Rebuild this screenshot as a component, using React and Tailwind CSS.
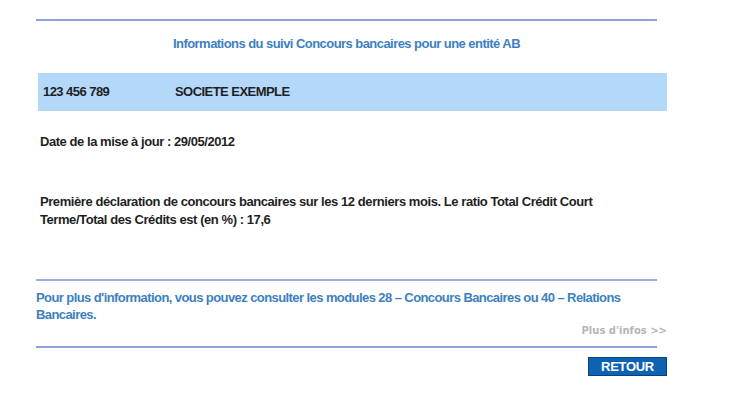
import React from 'react';

const font = { fontFamily: '"Liberation Sans", Arial, sans-serif' };

export default function App() {
  return (
    <div className="w-[730px] h-[410px] bg-white overflow-hidden" style={font}>
      <div className="ml-[36px] w-[631px] pt-[19px] text-[13px] font-bold tracking-[-0.55px] text-[#1f1f1f]">
        {/* Header */}
        <div className="w-[621px] h-[2px] bg-[#8ea2d8]" />
        <div className="mt-[15px] w-[621px] leading-[15px] text-center text-[#3d7fc1]">
          Informations du suivi Concours bancaires pour une entité AB
        </div>

        {/* Entity band */}
        <div className="mt-[22px] ml-[2px] h-[38px] bg-[#b4d8fa] flex items-center pl-[5px]">
          <span className="w-[132px]">123 456 789</span>
          <span>SOCIETE EXEMPLE</span>
        </div>

        <div className="pl-[4px] mt-[24px] leading-[14px] tracking-[-0.45px]">Date de la mise à jour : 29/05/2012</div>

        <p className="pl-[4px] mt-[44px] w-[600px] leading-[18px] tracking-[-0.43px]">
          Première déclaration de concours bancaires sur les 12 derniers mois. Le ratio Total Crédit Court
          Terme/Total des Crédits est (en %) : 17,6
        </p>

        {/* Footer */}
        <div className="mt-[50px] w-[621px] h-[2px] bg-[#9aaee0]" />
        <p className="mt-[8px] w-[621px] leading-[17px] text-[#3d7fc1] tracking-[-0.58px]">
          Pour plus d'information, vous pouvez consulter les modules 28 – Concours Bancaires ou 40 – Relations
          Bancaires.
        </p>
        <div className="flex justify-end mt-[2px]">
          <span
            className="text-[10px] text-[#b5b5b5] tracking-normal leading-[12px]"
            style={{ fontFamily: '"DejaVu Sans", Verdana, sans-serif' }}
          >
            Plus d'infos &gt;&gt;
          </span>
        </div>
        <div className="mt-[9px] w-[621px] h-[2px] bg-[#8ea2d8]" />
        <div className="flex justify-end mt-[9px]">
          <button className="w-[79px] h-[19px] bg-[#0d62b4] border border-[#0a3f7a] text-white text-[13px] font-bold tracking-[-0.3px] leading-none">
            RETOUR
          </button>
        </div>
      </div>
    </div>
  );
}
